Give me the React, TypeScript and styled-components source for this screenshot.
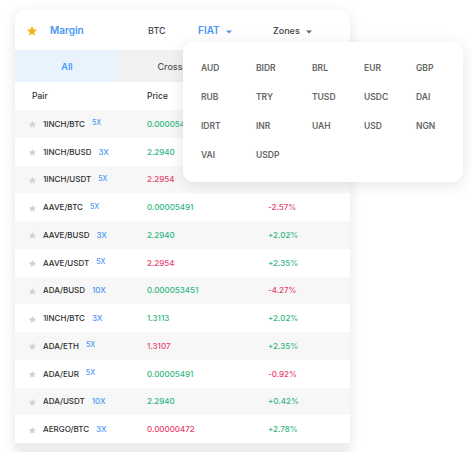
import React from "react";
import styled, { createGlobalStyle } from "styled-components";

const GlobalStyle = createGlobalStyle`
    body {
        margin: 0;
        background: #fff;
        font-family: Inter, "Open Sans", sans-serif;
    }
`;

type Row = { pair: string; lev: string; price: string; up: boolean; change?: string };

const rows: Row[] = [
    { pair: "1INCH/BTC", lev: "5X", price: "0.00005491", up: true },
    { pair: "1INCH/BUSD", lev: "3X", price: "2.2940", up: true },
    { pair: "1INCH/USDT", lev: "5X", price: "2.2954", up: false },
    { pair: "AAVE/BTC", lev: "5X", price: "0.00005491", up: true, change: "-2.57%" },
    { pair: "AAVE/BUSD", lev: "3X", price: "2.2940", up: true, change: "+2.02%" },
    { pair: "AAVE/USDT", lev: "5X", price: "2.2954", up: false, change: "+2.35%" },
    { pair: "ADA/BUSD", lev: "10X", price: "0.000053451", up: true, change: "-4.27%" },
    { pair: "1INCH/BTC", lev: "3X", price: "1.3113", up: true, change: "+2.02%" },
    { pair: "ADA/ETH", lev: "5X", price: "1.3107", up: false, change: "+2.35%" },
    { pair: "ADA/EUR", lev: "5X", price: "0.00005491", up: true, change: "-0.92%" },
    { pair: "ADA/USDT", lev: "10X", price: "2.2940", up: true, change: "+0.42%" },
    { pair: "AERGO/BTC", lev: "3X", price: "0.00000472", up: false, change: "+2.78%" },
];

const fiat = ["AUD", "BIDR", "BRL", "EUR", "GBP", "RUB", "TRY", "TUSD", "USDC", "DAI", "IDRT", "INR", "UAH", "USD", "NGN", "VAI", "USDP"];

function Star({ color, size }: { color: string; size: number }) {
    return (
        <svg width={size} height={size} viewBox="0 0 24 24">
            <path fill={color} d="M12 2.2l2.95 6.3 6.85.8-5.05 4.7 1.35 6.8L12 17.4l-6.1 3.4 1.35-6.8L2.2 9.3l6.85-.8z" />
        </svg>
    );
}

function Caret({ color }: { color: string }) {
    return (
        <svg width="6" height="4" viewBox="0 0 6 4">
            <path fill={color} d="M0 0.5h6L3 3.5z" />
        </svg>
    );
}

export default function App() {
    return (
        <>
            <GlobalStyle />
            <Page>
                <Card>
                    <Header>
                        <Star color="#f5b21a" size={12} />
                        <HeadItem active>Margin</HeadItem>
                        <HeadItem>BTC</HeadItem>
                        <HeadItem active>FIAT <Caret color="#4a97f4" /></HeadItem>
                        <HeadItem>Zones <Caret color="#666" /></HeadItem>
                    </Header>
                    <Tabs>
                        <Tab active>All</Tab>
                        <Tab>Cross</Tab>
                        {/* third tab sits under the open menu */}
                        <Tab />
                    </Tabs>
                    <TableHead>
                        <span>Pair</span>
                        <span>Price</span>
                    </TableHead>
                    {rows.map((r, i) => (
                        <TableRow key={i} odd={i % 2 === 0}>
                            <Star color="#d2d2d2" size={9} />
                            <PairCell>
                                {r.pair}
                                <Lev small={r.lev === "5X"}>{r.lev}</Lev>
                            </PairCell>
                            <Num up={r.up}>{r.price}</Num>
                            <Num up={!!r.change && r.change[0] === "+"}>{r.change}</Num>
                        </TableRow>
                    ))}
                    <Footer />
                    <Dropdown>
                        {fiat.map(f => <Option key={f}>{f}</Option>)}
                    </Dropdown>
                </Card>
            </Page>
        </>
    );
}

var
Page = styled.div`
    padding: 10px 0 0 15px;
`,
Card = styled.div`
    position: relative;
    width: 335px;
    height: 442px;
    background: #fff;
    border-radius: 10px;
    box-shadow: 0 3px 14px rgba(0, 0, 0, 0.1);
`,
Header = styled.div`
    display: grid;
    grid-template-columns: 24px 98px 50px 75px auto;
    align-items: center;
    height: 40px;
    padding-left: 11px;
    svg { margin-top: 1px; }
`,
HeadItem = styled.div<{ active?: boolean }>`
    display: flex;
    align-items: center;
    gap: 6px;
    font-size: ${p => p.active ? "10px" : "9px"};
    font-weight: ${p => p.active ? 600 : 500};
    color: ${p => p.active ? "#4a97f4" : "#444"};
    svg { margin-top: 3px; }
`,
Tabs = styled.div`
    display: grid;
    grid-template-columns: 104px 102px auto;
    height: 32px;
`,
Tab = styled.div<{ active?: boolean }>`
    display: flex;
    align-items: center;
    justify-content: center;
    font-size: 9px;
    font-weight: ${p => p.active ? 600 : 500};
    color: ${p => p.active ? "#4a97f4" : "#555"};
    background: ${p => p.active ? "#e9f3fe" : "#f1f1f1"};
`,
TableHead = styled.div`
    display: grid;
    grid-template-columns: 115px 121px auto;
    align-items: center;
    height: 28px;
    padding-left: 17px;
    font-size: 8.5px;
    font-weight: 500;
    color: #333;
`,
TableRow = styled.div<{ odd: boolean }>`
    display: grid;
    grid-template-columns: 15px 104px 121px auto;
    align-items: center;
    height: 27.75px;
    padding-left: 13px;
    background: ${p => p.odd ? "#f7f7f7" : "#fff"};
    svg { margin-top: 2px; }
`,
PairCell = styled.div`
    display: flex;
    align-items: center;
    gap: 7px;
    font-size: 8px;
    font-weight: 500;
    color: #2f2f2f;
`,
Lev = styled.span<{ small: boolean }>`
    font-size: ${p => p.small ? "7px" : "8px"};
    font-weight: 500;
    color: #4a97f4;
    margin-top: ${p => p.small ? "-2px" : "0"};
`,
Num = styled.div<{ up: boolean }>`
    font-size: 8px;
    font-weight: 500;
    color: ${p => p.up ? "#2fb57f" : "#e8436b"};
`,
Footer = styled.div`
    height: 9px;
    background: #eeeeee;
    border-radius: 0 0 10px 10px;
`,
Dropdown = styled.div`
    position: absolute;
    left: 168px;
    top: 32px;
    width: 280px;
    height: 140px;
    box-sizing: border-box;
    padding: 11px 0 0 18px;
    display: grid;
    grid-template-columns: 55px 56px 52px 52px auto;
    grid-auto-rows: 29px;
    align-content: start;
    align-items: center;
    background: #fff;
    border-radius: 10px;
    box-shadow: 0 3px 16px rgba(0, 0, 0, 0.1);
`,
Option = styled.div`
    font-size: 8.5px;
    font-weight: 600;
    color: #666;
`;
